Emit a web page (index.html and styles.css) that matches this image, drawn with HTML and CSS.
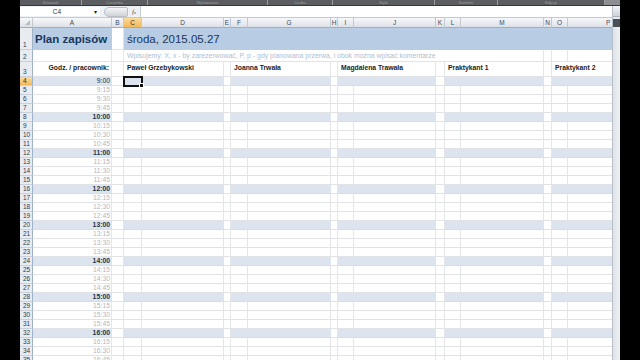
FILE: index.html
```html
<!DOCTYPE html>
<html lang="pl">
<head>
  <meta charset="UTF-8">
  <meta name="viewport" content="width=device-width, initial-scale=1.0">
  <title>Plan zapisów</title>
  <link rel="stylesheet" href="styles.css">
</head>
<body>
  <div class="app">
    <div class="ribbon">
      <span class="group w62">Schowek</span>
      <span class="group w66">Czcionka</span>
      <span class="group w120">Wyrównanie</span>
      <span class="group w65">Liczba</span>
      <span class="group w102">Style</span>
      <span class="group w63">Komórki</span>
      <span class="group w107">Edycja</span>
      <span class="group last"></span>
    </div>

    <div class="workspace">
      <div class="main">
        <div class="formula-bar">
          <div class="name-box"><span class="cell-ref">C4</span><span class="drop">▾</span></div>
          <div class="knob"></div>
          <span class="fx">f<small>x</small></span>
          <div class="formula-input"></div>
        </div>

        <div class="sheet" id="sheet">
          <div class="row col-heads">
            <div class="corner"></div>
            <div class="ch">A</div>
            <div class="ch">B</div>
            <div class="ch sel">C</div>
            <div class="ch">D</div>
            <div class="ch">E</div>
            <div class="ch">F</div>
            <div class="ch">G</div>
            <div class="ch">H</div>
            <div class="ch">I</div>
            <div class="ch">J</div>
            <div class="ch">K</div>
            <div class="ch">L</div>
            <div class="ch">M</div>
            <div class="ch">N</div>
            <div class="ch">O</div>
            <div class="ch p-head">P</div>
          </div>

          <div class="row r1">
            <div class="rh">1</div>
            <div class="c title">Plan zapisów</div>
            <div class="c gap"></div>
            <div class="c date span-cp">środa, 2015.05.27</div>
          </div>

          <div class="row r2">
            <div class="rh">2</div>
            <div class="c"></div>
            <div class="c"></div>
            <div class="c note span-cm">Wpisujemy: X, x - by zarezerwować, P, p - gdy planowana przerwa, i obok można wpisać komentarze</div>
            <div class="c"></div>
            <div class="c"></div>
            <div class="c"></div>
          </div>

          <div class="row r3">
            <div class="rh">3</div>
            <div class="c head-a">Godz. / pracownik:</div>
            <div class="c"></div>
            <div class="c person col-c">Paweł Grzebykowski</div>
            <div class="c"></div>
            <div class="c person col-f">Joanna Trwała</div>
            <div class="c"></div>
            <div class="c person col-i">Magdalena Trawała</div>
            <div class="c"></div>
            <div class="c person col-l">Praktykant 1</div>
            <div class="c"></div>
            <div class="c person col-o">Praktykant 2</div>
          </div>
        </div>
      </div>

      <div class="scrollbar">
        <div class="sb-btn"></div>
        <div class="sb-split"></div>
        <div class="sb-track"></div>
      </div>
    </div>
  </div>

  <script>
    const sheet = document.getElementById('sheet');
    const cols = 'BCDEFGHIJKLMNOP'.split('');
    const gaps = ['B', 'E', 'H', 'K', 'N'];

    for (let r = 4; r <= 35; r++) {
      const mins = 540 + (r - 4) * 15;
      const h = Math.floor(mins / 60);
      const m = mins % 60;

      const row = document.createElement('div');
      row.className = 'row body-row' + (m === 0 ? ' band' : '');

      const rh = document.createElement('div');
      rh.className = 'rh' + (r === 4 ? ' sel' : '');
      rh.textContent = r;
      row.appendChild(rh);

      const time = document.createElement('div');
      time.className = 'c time ' + (m === 0 ? 'hour' : 'quarter') + (r === 4 ? ' plain' : '');
      time.textContent = h + ':' + String(m).padStart(2, '0');
      row.appendChild(time);

      cols.forEach(col => {
        const cell = document.createElement('div');
        cell.className = 'c' + (gaps.includes(col) ? ' gap' : '');
        if (r === 4 && col === 'C') cell.classList.add('active');
        row.appendChild(cell);
      });

      sheet.appendChild(row);
    }
  </script>
</body>
</html>
```

FILE: styles.css
```css
body {
  margin: 0;
  width: 640px;
  height: 360px;
  overflow: hidden;
  background: #000;
  font-family: "Liberation Sans", Arial, sans-serif;
}
.app {
  margin-left: 20px;
  width: 600px;
  height: 360px;
  display: flex;
  flex-direction: column;
  background: #fff;
}

/* ribbon group labels */
.ribbon {
  height: 5px;
  display: flex;
  background: #5b5d60;
  border-bottom: 1px solid #34363a;
  overflow: hidden;
}
.group {
  box-sizing: border-box;
  border-right: 1px solid #9a9c9f;
  color: #9c9ea1;
  font-size: 4px;
  line-height: 5px;
  text-align: center;
}
.w62 { width: 62px; }
.w66 { width: 66px; }
.w120 { width: 120px; }
.w65 { width: 65px; }
.w102 { width: 102px; }
.w63 { width: 63px; }
.w107 { width: 107px; }
.group.last {
  flex: 1;
  background: #8c8e91;
  border-right: none;
}

.workspace {
  flex: 1;
  display: flex;
  min-height: 0;
}
.main {
  width: 593px;
  display: flex;
  flex-direction: column;
  overflow: hidden;
}

/* formula bar */
.formula-bar {
  height: 11px;
  display: flex;
  align-items: center;
  background: #eef1f5;
  border-bottom: 1px solid #c4cad2;
}
.name-box {
  width: 80px;
  height: 9px;
  display: flex;
  align-items: center;
  background: #fff;
  font-size: 6.5px;
  color: #333;
}
.cell-ref {
  flex: 1;
  text-align: center;
}
.drop {
  width: 6px;
  font-size: 6px;
  color: #222;
}
.knob {
  width: 22px;
  height: 8px;
  margin-left: 4px;
  border-radius: 5px 2px 2px 5px;
  background: linear-gradient(#f4f5f7, #cfd3d9);
  border: 1px solid #b9bec6;
}
.fx {
  width: 12px;
  text-align: center;
  font-family: "Liberation Serif", serif;
  font-style: italic;
  font-size: 7px;
  color: #555;
}
.fx small {
  font-size: 5px;
}
.formula-input {
  flex: 1;
  height: 11px;
  background: #fff;
  border-left: 1px solid #c4cad2;
}

/* sheet grid */
.sheet {
  flex: 1;
  overflow: hidden;
}
.row {
  display: grid;
  grid-template-columns: 13px 79px 12px 18px 82px 7px 17px 83px 7px 16px 82px 9px 16px 83px 8px 16px 82px;
  height: 9px;
}
.row > div {
  box-sizing: border-box;
  min-width: 0;
  white-space: nowrap;
}

.col-heads {
  height: 10px;
}
.corner,
.ch {
  background: linear-gradient(#f7f8fa, #dde1e7);
  border-right: 1px solid #c3c9d1;
  border-bottom: 1px solid #a3acb8;
}
.corner {
  position: relative;
}
.corner::after {
  content: "";
  position: absolute;
  right: 2px;
  bottom: 2px;
  border-left: 5px solid transparent;
  border-bottom: 5px solid #b7bdc6;
}
.ch {
  font-size: 6.5px;
  line-height: 9px;
  text-align: center;
  color: #3e4c60;
}
.ch.p-head {
  text-align: left;
  padding-left: 38px;
}
.ch.sel,
.rh.sel {
  background: linear-gradient(#fbdc9c, #f3b75a);
  color: #3a3020;
}

.rh {
  display: flex;
  align-items: flex-end;
  padding-left: 3px;
  background: #e8ecf1;
  border-right: 1px solid #9fb1c5;
  border-bottom: 1px solid #c9d0d9;
  font-size: 6.5px;
  line-height: 8px;
  color: #2e3c50;
}

.c {
  background: #fff;
  border-right: 1px solid #e4e6e8;
  border-bottom: 1px solid #e1e3e6;
}

/* row 1: title */
.r1 {
  height: 22px;
}
.r1 .c {
  background: #b8cce4;
  border: none;
  color: #17375e;
  font-size: 11.5px;
  line-height: 22px;
}
.r1 .c.gap {
  background: #fff;
  border-right: 1px solid #e1e3e6;
  border-bottom: 1px solid #e1e3e6;
}
.title {
  padding-left: 2px;
  font-weight: bold;
}
.date {
  padding-left: 3px;
}
.span-cp {
  grid-column: 4 / 18;
}

/* row 2: note */
.r2 {
  height: 12px;
}
.note {
  padding-left: 3px;
  font-size: 6.9px;
  line-height: 11px;
  color: #b0bed2;
}
.span-cm {
  grid-column: 4 / 15;
}

/* row 3: people */
.r3 {
  height: 15px;
}
.head-a,
.person {
  font-size: 6.8px;
  font-weight: bold;
  line-height: 12px;
  color: #1c1c1c;
}
.head-a {
  text-align: right;
  padding-right: 2px;
}
.person {
  text-align: left;
  padding-left: 3px;
}
.col-c { grid-column: 4 / 6; }
.col-f { grid-column: 7 / 9; }
.col-i { grid-column: 10 / 12; }
.col-l { grid-column: 13 / 15; }
.col-o { grid-column: 16 / 18; }

/* time rows */
.time {
  text-align: right;
  padding-right: 1px;
  font-size: 6.8px;
  line-height: 8px;
}
.time.hour {
  font-weight: bold;
  color: #243447;
}
.time.hour.plain {
  font-weight: normal;
}
.time.quarter {
  color: #b5b7ba;
}
.band .c:not(.gap) {
  background: #dbe4ef;
  border-right-color: #dbe4ef;
  border-bottom-color: #d3dce8;
}

.c.active {
  position: relative;
  z-index: 1;
  outline: 2px solid #111;
  outline-offset: -1px;
  background: #dbe4ef;
}
.c.active::after {
  content: "";
  position: absolute;
  right: -3px;
  bottom: -3px;
  width: 3px;
  height: 3px;
  background: #111;
  border: 1px solid #fff;
}

/* vertical scrollbar */
.scrollbar {
  width: 7px;
  display: flex;
  flex-direction: column;
  background: #e6e9ee;
  border-left: 1px solid #b8bfc9;
}
.sb-btn {
  height: 10px;
  background: linear-gradient(#f3f4f6, #cfd4da);
  border-bottom: 1px solid #a9b0ba;
}
.sb-split {
  height: 8px;
  margin-top: 2px;
  background: #4b4e53;
}
.sb-track {
  flex: 1;
  background: linear-gradient(90deg, #dfe3e8, #eef0f3);
}
```
